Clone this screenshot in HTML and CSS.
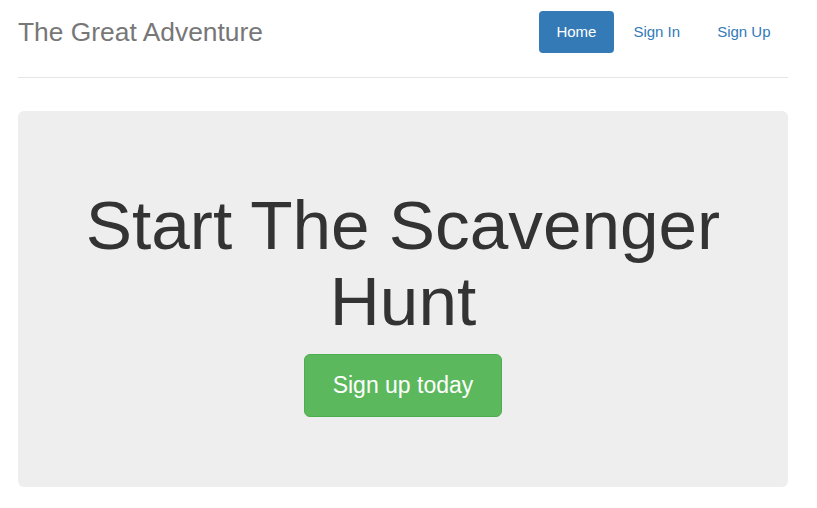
FILE: index.html
```html
<!DOCTYPE html>
<html lang="en">
<head>
<meta charset="utf-8">
<title>The Great Adventure</title>
<link rel="stylesheet" href="styles.css">
</head>
<body>
<div class="container">
  <header class="header">
    <h3 class="brand">The Great Adventure</h3>
    <nav class="nav">
      <a class="pill active" href="#">Home</a>
      <a class="pill" href="#">Sign In</a>
      <a class="pill" href="#">Sign Up</a>
    </nav>
  </header>
  <section class="jumbotron">
    <h1 class="title">Start The Scavenger Hunt</h1>
    <a class="btn-signup" href="#">Sign up today</a>
  </section>
</div>
</body>
</html>
```

FILE: styles.css
```css
html, body {
  margin: 0;
  padding: 0;
  background: #fff;
}
body {
  font-family: "Liberation Sans", Arial, sans-serif;
  color: #333;
}
.container {
  width: 770px;
  margin-left: 18px;
}
.header {
  display: flex;
  justify-content: space-between;
  align-items: flex-start;
  padding: 11px 0 24px;
  border-bottom: 1px solid #e5e5e5;
}
.brand {
  margin: 0;
  padding-top: 1px;
  font-size: 26.4px;
  font-weight: normal;
  line-height: 41px;
  color: #777;
}
.nav {
  display: flex;
  gap: 2px;
}
.pill {
  display: block;
  padding: 11px 17.5px;
  font-size: 15px;
  line-height: 20px;
  color: #337ab7;
  text-decoration: none;
  border-radius: 4px;
}
.pill.active {
  background: #337ab7;
  color: #fff;
}
.jumbotron {
  margin-top: 33px;
  background: #eee;
  border-radius: 6px;
  padding: 76px 0 70px;
  display: flex;
  flex-direction: column;
  align-items: center;
  text-align: center;
}
.title {
  margin: 0;
  font-size: 69.3px;
  font-weight: normal;
  line-height: 76px;
  color: #333;
  padding: 0 60px;
}
.btn-signup {
  margin-top: 15px;
  display: inline-block;
  padding: 15px 28px;
  font-size: 23px;
  line-height: 31px;
  color: #fff;
  background: #5cb85c;
  border: 1px solid #4cae4c;
  border-radius: 6px;
  text-decoration: none;
}
```
